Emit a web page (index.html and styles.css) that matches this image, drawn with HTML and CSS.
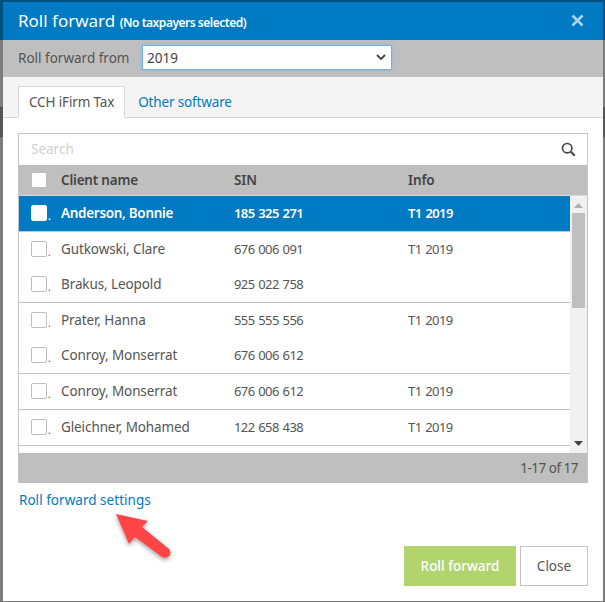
FILE: index.html
```html
<!DOCTYPE html>
<html lang="en">
<head>
<meta charset="utf-8">
<title>Roll forward</title>
<link rel="stylesheet" href="styles.css">
</head>
<body>
<div class="dialog">
  <header class="titlebar">
    <h1 class="title">Roll forward <small class="subtitle">(No taxpayers selected)</small></h1>
    <svg class="close-x" width="13" height="13" viewBox="0 0 13 13"><path d="M1.5 1.5l10 10M11.5 1.5l-10 10" stroke="#a9d4f0" stroke-width="2.6" fill="none"/></svg>
  </header>
  <div class="fromrow">
    <span class="fromlabel">Roll forward from</span>
    <div class="select">
      <span>2019</span>
      <svg width="10" height="7" viewBox="0 0 10 7"><path d="M1 1l4 4 4-4" stroke="#444" stroke-width="1.8" fill="none"/></svg>
    </div>
  </div>
  <nav class="tabs">
    <span class="tab active">CCH iFirm Tax</span>
    <span class="tab">Other software</span>
  </nav>
  <main class="content">
    <div class="grid">
      <div class="search">
        <span>Search</span>
        <svg width="15" height="15" viewBox="0 0 15 15"><circle cx="6.2" cy="6.2" r="4.7" stroke="#444" stroke-width="1.7" fill="none"/><path d="M9.8 9.8l4 4" stroke="#444" stroke-width="2" fill="none"/></svg>
      </div>
      <div class="row head">
        <span class="cell-check"><i class="check"></i></span>
        <span class="name">Client name</span><span class="sin">SIN</span><span class="info">Info</span>
      </div>
      <div class="body">
        <div class="rows">
          <div class="row selected"><span class="cell-check"><i class="check"></i>.</span><span class="name">Anderson, Bonnie</span><span class="sin">185 325 271</span><span class="info">T1 2019</span></div>
          <div class="row"><span class="cell-check"><i class="check"></i>.</span><span class="name">Gutkowski, Clare</span><span class="sin">676 006 091</span><span class="info">T1 2019</span></div>
          <div class="row ruled"><span class="cell-check"><i class="check"></i>.</span><span class="name">Brakus, Leopold</span><span class="sin">925 022 758</span><span class="info"></span></div>
          <div class="row"><span class="cell-check"><i class="check"></i>.</span><span class="name">Prater, Hanna</span><span class="sin">555 555 556</span><span class="info">T1 2019</span></div>
          <div class="row ruled"><span class="cell-check"><i class="check"></i>.</span><span class="name">Conroy, Monserrat</span><span class="sin">676 006 612</span><span class="info"></span></div>
          <div class="row ruled"><span class="cell-check"><i class="check"></i>.</span><span class="name">Conroy, Monserrat</span><span class="sin">676 006 612</span><span class="info">T1 2019</span></div>
          <div class="row ruled"><span class="cell-check"><i class="check"></i>.</span><span class="name">Gleichner, Mohamed</span><span class="sin">122 658 438</span><span class="info">T1 2019</span></div>
        </div>
        <div class="scrollbar">
          <svg width="9" height="5" viewBox="0 0 9 5"><path d="M4.5 0L9 5H0z" fill="#b0b0b0"/></svg>
          <div class="track"><div class="thumb"></div></div>
          <svg width="9" height="5" viewBox="0 0 9 5"><path d="M0 0h9L4.5 5z" fill="#444"/></svg>
        </div>
      </div>
      <div class="pager">1-17 of 17</div>
    </div>
    <a class="settings">Roll forward settings</a>
    <div class="actions">
      <button class="btn primary">Roll forward</button>
      <button class="btn">Close</button>
    </div>
    <svg class="arrow" width="72" height="60" viewBox="110 510 72 60">
      <defs><filter id="s" x="-30%" y="-30%" width="160%" height="160%"><feDropShadow dx="0" dy="2" stdDeviation="2" flood-color="#000" flood-opacity=".4"/></filter></defs>
      <path d="M116 514L148 521 142 527 169 549Q172 553 169 556 166 559 162 557L135 537 129 544Z" fill="#ff4545" filter="url(#s)"/>
    </svg>
  </main>
</div>
</body>
</html>
```
FILE: styles.css
```css
* { box-sizing: border-box; }
html, body { margin: 0; height: 100%; }
body {
  width: 605px; height: 602px; overflow: hidden;
  background: linear-gradient(#00507f 0 40px, #7c7c7c 40px 107px, #565656 107px 137px, #7c7c7c 137px);
  padding: 2px 2px 1px 3px;
  font-family: "Noto Sans", sans-serif; font-size: 13.5px; color: #555;
}
.dialog { display: flex; flex-direction: column; height: 100%; background: #fff; }
.titlebar {
  height: 38px; flex: none; background: #007ac3; color: #fff;
  display: flex; align-items: center; justify-content: space-between;
  padding: 0 19px 2px 15px;
}
.title { margin: 0; font-weight: 400; font-size: 17px; }
.subtitle { font-size: 12px; font-weight: 600; letter-spacing: -.48px; }
.fromrow {
  height: 37px; flex: none; background: #bfbfbf;
  display: flex; align-items: center; padding: 0 0 2px 15px; gap: 12px;
}
.fromlabel { width: 112px; }
.select {
  width: 250px; height: 25px; background: #fff; border: 1px solid #6ab4ec;
  box-shadow: 0 0 4px rgba(106,180,236,.5); padding: 0 5px 0 4px; color: #444;
  display: flex; align-items: center; justify-content: space-between;
}
.tabs {
  height: 41px; flex: none; background: #f4f4f4; border-bottom: 1px solid #d8d8d8;
  display: flex; align-items: flex-end; padding-left: 15px; letter-spacing: -.15px;
}
.tab { height: 31px; display: flex; align-items: center; padding: 0 13px; color: #007ac3; }
.tab.active { height: 32px; margin-bottom: -1px; padding: 0 10px; background: #fff; color: #555; border: 1px solid #d8d8d8; border-bottom-color: #fff; }
.content { flex: 1; position: relative; padding: 15px 15px 0; display: flex; flex-direction: column; }
.grid { border: 1px solid #c4c4c4; border-bottom: 0; }
.search {
  height: 31px; padding: 0 11px 0 12px; color: #d0d0d0;
  display: flex; align-items: center; justify-content: space-between;
}
.search span { margin-bottom: 2px; }
.row { height: 35px; padding-bottom: 1px; display: flex; align-items: center; letter-spacing: -.1px; }
.head { height: 31px; padding-bottom: 0; background: #bfbfbf; color: #444; font-weight: 600; border-bottom: 1px solid #d8d8d8; letter-spacing: -.2px; }
.cell-check { width: 42px; padding-left: 12px; display: flex; align-items: flex-end; line-height: 1; font-size: 10px; }
.check { display: block; width: 16px; height: 16px; background: #fff; border: 1px solid #bdbdbd; border-radius: 2px; margin-right: 1px; }
.head .check { width: 14px; height: 14px; margin-left: 1px; border: 0; border-radius: 0; }
.name { width: 173px; }
.sin { width: 174px; }
.info { flex: 1; }
.row .sin, .row .info { font-size: 13px; letter-spacing: -.6px; word-spacing: 1px; }
.head .sin, .head .info { font-size: 13.5px; letter-spacing: -.1px; }
.body { display: flex; height: 257px; }
.rows { flex: 1; height: 257px; overflow: hidden; }
.row.ruled { height: 36px; border-bottom: 1px solid #c4c4c4; }
.selected { height: 36px; background: #007ac3; color: #fff; font-weight: 600; border-bottom: 1px solid #c4c4c4; letter-spacing: -.3px; }
.selected .check { border-color: #fff; }
.scrollbar { width: 17px; background: #f1f1f1; display: flex; flex-direction: column; align-items: center; padding-top: 7px; }
.track { flex: 1; width: 13px; padding-top: 5px; }
.thumb { height: 95px; background: #bfbfbf; }
.scrollbar svg { flex: none; }
.scrollbar svg:last-child { margin-bottom: 7px; }
.pager { height: 30px; background: #bfbfbf; padding: 0 9px; display: flex; align-items: center; justify-content: flex-end; letter-spacing: -.5px; }
.settings { color: #007ac3; margin: 6px 0 0 1px; line-height: 22px; letter-spacing: .03px; }
.actions { margin-top: auto; margin-bottom: 15px; display: flex; justify-content: flex-end; gap: 4px; }
.btn {
  height: 40px; font: inherit; border: 1px solid #c4c4c4; background: #fff; color: #555; padding: 0; width: 68px;
}
.btn.primary { width: 112px; background: #b2d46f; border-color: #b2d46f; color: #fff; font-weight: 500; }
.arrow { position: absolute; left: 107px; top: 392px; }
```
